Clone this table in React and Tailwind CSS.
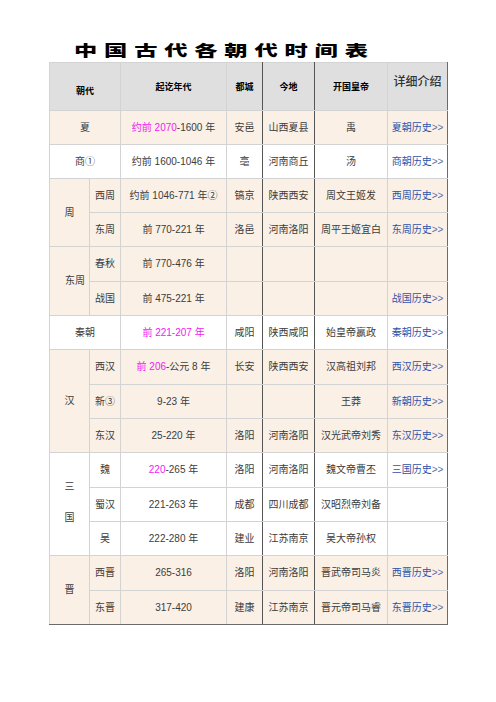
import React from "react";

const L = "border-r-[#d3d3d3]";
const D = "border-r-[#555555]";
const O = "border-r-[#6b6b6b]";
const BL = "border-b-[#d3d3d3]";
const BO = "border-b-[#6b6b6b]";

function C({ children, r = L, b = BL, className = "", ...rest }) {
  return (
    <td
      className={`border-r border-b ${r} ${b} text-center align-middle p-0 ${className}`}
      {...rest}
    >
      {children}
    </td>
  );
}

const M = ({ children }) => <span className="text-[#f020f0]">{children}</span>;
const A = ({ children }) => (
  <span className="text-[#3152a6]">
    {children}
    <span className="text-[#5a6fa8]">&gt;&gt;</span>
  </span>
);

function Row({ bg, first, span, years, capital, place, emperor, link, last, h = "h-[34px]" }) {
  const b = last ? BO : BL;
  return (
    <tr className={bg}>
      {first}
      {span && <C b={b} className={h}>{span}</C>}
      <C b={b} className={h}>{years}</C>
      <C b={b} r={D}>{capital}</C>
      <C b={b} r={D}>{place}</C>
      <C b={b}>{emperor}</C>
      <C b={b} r={O}>{link ? <A>{link}</A> : null}</C>
    </tr>
  );
}

export default function App() {
  const beige = "bg-[#faf0e6]";
  const white = "bg-white";
  return (
    <div className="min-h-[702px] w-[496px] bg-white pl-[49px] font-['Liberation_Sans','Noto_Sans_CJK_SC',sans-serif] text-[#3c3c3c]">
      <div className="h-[62px] pt-[36px] flex items-center">
        <div className="pl-[25px] h-[26px] flex items-center">
          <span className="inline-block origin-left scale-x-[1.55] text-[15px] font-black tracking-[4.4px] text-black leading-none font-['Noto_Sans_CJK_SC',sans-serif] whitespace-nowrap">
            中国古代各朝代时间表
          </span>
        </div>
      </div>
      <table className="table-fixed border-collapse border-t border-l border-t-[#d3d3d3] border-l-[#d3d3d3] w-[398px] text-[10px] leading-none">
        <colgroup>
          <col className="w-[40px]" />
          <col className="w-[31px]" />
          <col className="w-[106px]" />
          <col className="w-[36px]" />
          <col className="w-[52px]" />
          <col className="w-[73px]" />
          <col className="w-[60px]" />
        </colgroup>
        <tbody>
          <tr className="bg-[#dfdfdf] text-black">
            <C colSpan={2} className="h-[48px] text-[9px] font-bold pt-[10px]">朝代</C>
            <C className="text-[9px] font-bold pt-[2px]">起讫年代</C>
            <C r={D} className="text-[9px] font-bold pt-[2px]">都城</C>
            <C r={D} className="text-[9px] font-bold pt-[2px]">今地</C>
            <C className="text-[9px] font-bold pt-[2px]">开国皇帝</C>
            <C r={O} className="text-[12px] font-medium text-[#333] pb-[10px]">详细介绍</C>
          </tr>

          <Row bg={beige} first={<C colSpan={2} className="h-[34px]">夏</C>}
            years={<><M>约前 2070</M>-1600 年</>} capital="安邑" place="山西夏县" emperor="禹" link="夏朝历史" />
          <Row bg={white} first={<C colSpan={2} className="h-[34px]">商①</C>}
            years="约前 1600-1046 年" capital="亳" place="河南商丘" emperor="汤" link="商朝历史" />

          <Row bg={beige} first={<C rowSpan={2}>周</C>} span="西周"
            years="约前 1046-771 年②" capital="镐京" place="陕西西安" emperor="周文王姬发" link="西周历史" />
          <Row bg={beige} span="东周"
            years="前 770-221 年" capital="洛邑" place="河南洛阳" emperor="周平王姬宜白" link="东周历史" />

          <Row bg={beige} first={<C rowSpan={2} className="text-left pl-[15px]">东周</C>} span="春秋"
            years="前 770-476 年" h="h-[35px]" />
          <Row bg={beige} span="战国" years="前 475-221 年" link="战国历史" />

          <Row bg={white} first={<C colSpan={2} className="h-[34px]">秦朝</C>}
            years={<M>前 221-207 年</M>} capital="咸阳" place="陕西咸阳" emperor="始皇帝嬴政" link="秦朝历史" />

          <Row bg={beige} first={<C rowSpan={3}>汉</C>} span="西汉" h="h-[35px]"
            years={<><M>前 206</M>-公元 8 年</>} capital="长安" place="陕西西安" emperor="汉高祖刘邦" link="西汉历史" />
          <Row bg={beige} span="新③" years="9-23 年" emperor="王莽" link="新朝历史" />
          <Row bg={beige} span="东汉" years="25-220 年" capital="洛阳" place="河南洛阳" emperor="汉光武帝刘秀" link="东汉历史" />

          <Row bg={white} first={<C rowSpan={3}><div className="flex flex-col items-center gap-[21px] pb-[4px]"><span>三</span><span>国</span></div></C>} span="魏" h="h-[35px]"
            years={<><M>220</M>-265 年</>} capital="洛阳" place="河南洛阳" emperor="魏文帝曹丕" link="三国历史" />
          <Row bg={white} span="蜀汉" years="221-263 年" capital="成都" place="四川成都" emperor="汉昭烈帝刘备" />
          <Row bg={white} span="吴" years="222-280 年" capital="建业" place="江苏南京" emperor="吴大帝孙权" />

          <Row bg={beige} first={<C rowSpan={2} b={BO}>晋</C>} span="西晋" h="h-[35px]"
            years="265-316" capital="洛阳" place="河南洛阳" emperor="晋武帝司马炎" link="西晋历史" />
          <Row bg={beige} span="东晋" years="317-420" capital="建康" place="江苏南京" emperor="晋元帝司马睿" link="东晋历史" last />
        </tbody>
      </table>
    </div>
  );
}
